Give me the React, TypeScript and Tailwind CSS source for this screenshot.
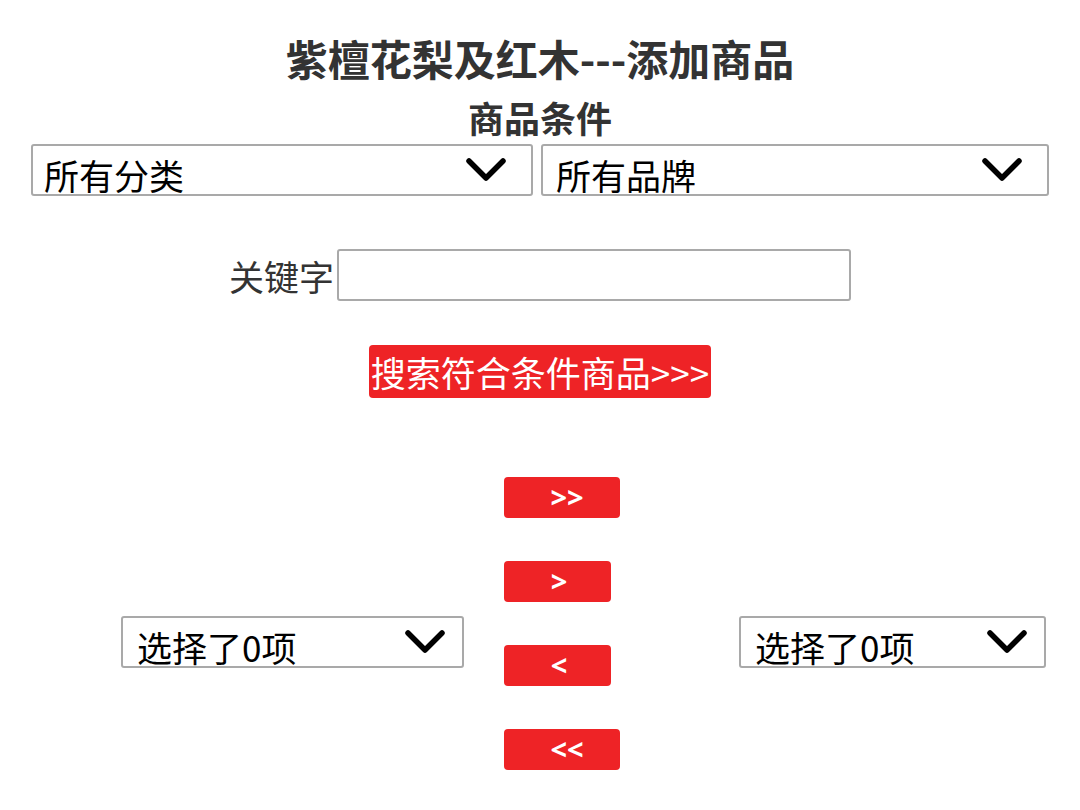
const CJK = { fontFamily: '"Noto Sans CJK SC", "Noto Sans", sans-serif' };
const LATIN = { fontFamily: '"Open Sans", "Noto Sans", sans-serif' };

function Chevron() {
  return (
    <svg width="42" height="26" viewBox="0 0 42 26" fill="none">
      <polyline points="4,4 21,21 38,4" stroke="#000" strokeWidth="5.5" strokeLinecap="round" strokeLinejoin="round" />
    </svg>
  );
}

function FakeSelect({ label, className, padX }: { label: string; className: string; padX: string }) {
  return (
    <div className={`relative h-[52px] overflow-hidden rounded-[3px] border-2 border-[#a9a9a9] bg-white ${className}`}>
      <div className={`pt-[11px] text-[35px] leading-none text-black ${padX}`} style={CJK}>
        {label}
      </div>
      <div className="absolute right-[16px] top-[11px]">
        <Chevron />
      </div>
    </div>
  );
}

function ArrowButton({ text, width }: { text: string; width: string }) {
  return (
    <button
      className={`flex h-[41px] items-center justify-center rounded-[4px] bg-[#ee2326] pb-[3px] text-[29px] font-bold leading-none text-white ${width}`}
      style={LATIN}
    >
      {text}
    </button>
  );
}

export default function App() {
  return (
    <div className="min-h-[810px] w-[1080px] bg-white text-[#333]" style={CJK}>
      <h1 className="pt-[37px] text-center text-[42px] font-bold leading-none">紫檀花梨及红木---添加商品</h1>
      <h3 className="mt-[20px] text-center text-[36px] font-bold leading-none">商品条件</h3>

      <div className="mt-[9px] flex gap-[8px] px-[31px]">
        <FakeSelect label="所有分类" className="w-[502px] [&>div:last-child]:right-[24px]" padX="pl-[11px]" />
        <FakeSelect label="所有品牌" className="flex-1 [&>div:last-child]:right-[24px]" padX="pl-[13px]" />
      </div>

      <div className="mt-[53px] flex items-center justify-center gap-[3px]">
        <span className="text-[35px] leading-none text-[#333]">关键字</span>
        <input className="h-[52px] w-[514px] rounded-[3px] border-2 border-[#a9a9a9] bg-white outline-none" />
      </div>

      <div className="mt-[44px] flex justify-center">
        <button className="flex h-[53px] w-[342px] items-center justify-center rounded-[4px] bg-[#ee2326] text-[35px] leading-none text-white">
          搜索符合条件商品&gt;&gt;&gt;
        </button>
      </div>

      <div className="mt-[79px] flex items-start pl-[121px]">
        <FakeSelect label="选择了0项" className="mt-[139px] w-[343px]" padX="pl-[14px]" />
        <div className="ml-[40px] flex w-[116px] flex-col gap-[43px]">
          <ArrowButton text=">>" width="w-[116px] pl-[10px]" />
          <ArrowButton text=">" width="w-[107px] pl-[3px]" />
          <ArrowButton text="<" width="w-[107px] pl-[3px]" />
          <ArrowButton text="<<" width="w-[116px] pl-[10px]" />
        </div>
        <FakeSelect label="选择了0项" className="ml-[119px] mt-[139px] w-[307px]" padX="pl-[14px]" />
      </div>
    </div>
  );
}
